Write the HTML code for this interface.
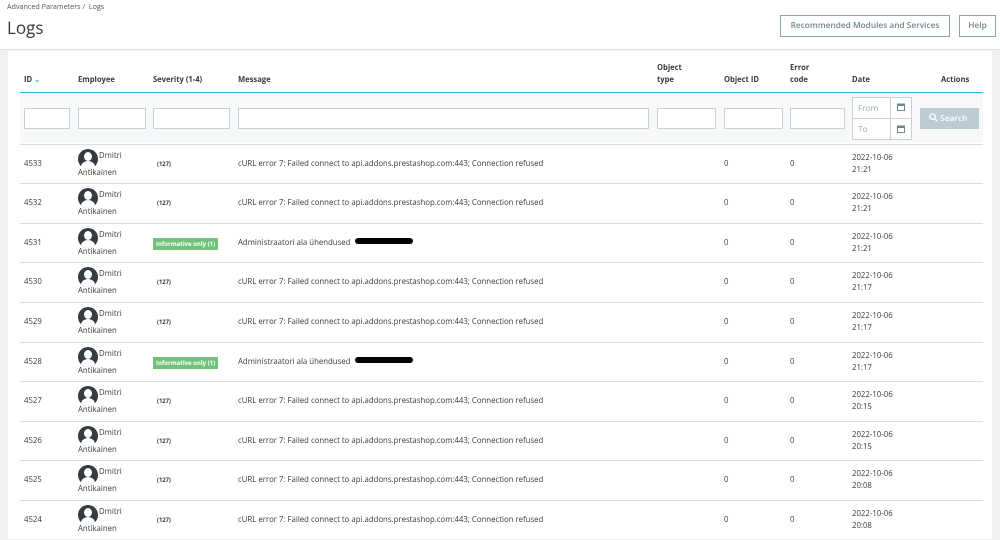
<!DOCTYPE html>
<html><head><meta charset="utf-8"><style>
*{margin:0;padding:0;box-sizing:border-box}
body{width:1000px;height:539px;overflow:hidden;background:#eff1f2;font-family:"Open Sans","Liberation Sans",sans-serif;color:#363a41;position:relative;font-size:7.8px}
.hdr{position:absolute;left:0;top:0;width:1000px;height:50px;background:#fff;border-bottom:1px solid #dfe3e6}
.bc{position:absolute;left:7px;top:2px;font-size:7.2px;color:#555}
.ttl{position:absolute;left:7px;top:16px;font-size:17px;color:#363a41}
.btn{position:absolute;top:15px;height:22px;border:1px solid #8fa1aa;background:#fff;color:#6c868e;font-size:8.3px;font-weight:600;line-height:20px;text-align:center}
.panel{position:absolute;left:8px;top:51px;width:984px;height:488px;background:#fff}
.a{position:absolute;white-space:nowrap}
.th{font-weight:bold;font-size:7.6px;color:#363a41;line-height:12px}
.inp{position:absolute;top:108px;height:21px;border:1px solid #c9d0d3;background:#fff}
.row{position:absolute;left:20px;width:963px;height:40px;border-top:1px solid #d8dee2}
.av{position:absolute;left:58px;top:4px;width:20px;height:20px;border-radius:50%;background:#363a41;overflow:hidden}
.av:before{content:"";position:absolute;left:6px;top:3px;width:8px;height:9px;border-radius:50%;background:#fff}
.av:after{content:"";position:absolute;left:3px;top:12px;width:14px;height:12px;border-radius:50%;background:#fff}
.badge{position:absolute;left:133px;top:14px;height:12px;background:#72c279;color:#fff;font-size:6px;font-weight:bold;padding:0 3px;line-height:12px}
</style></head><body>
<div class="hdr">
<div class="bc">Advanced Parameters&nbsp;/&nbsp; Logs</div>
<div class="ttl">Logs</div>
<div class="btn" style="left:780px;width:170px">Recommended Modules and Services</div>
<div class="btn" style="left:959px;width:37px">Help</div>
</div>
<div class="panel"></div>
<div class="a th" style="left:24px;top:74px">ID <span style="color:#25b9d7">&#8964;</span></div>
<div class="a th" style="left:78px;top:74px">Employee</div>
<div class="a th" style="left:153px;top:74px">Severity (1-4)</div>
<div class="a th" style="left:238px;top:74px">Message</div>
<div class="a th" style="left:657px;top:62px">Object<br>type</div>
<div class="a th" style="left:724px;top:74px">Object ID</div>
<div class="a th" style="left:790px;top:62px">Error<br>code</div>
<div class="a th" style="left:852px;top:74px">Date</div>
<div class="a th" style="left:941px;top:74px">Actions</div>
<div class="a" style="left:20px;top:92px;width:963px;height:51px;background:#f6f8f9;border-top:1.5px solid #25b9d7"></div>
<div class="inp" style="left:24px;width:46px"></div>
<div class="inp" style="left:78px;width:68px"></div>
<div class="inp" style="left:153px;width:77px"></div>
<div class="inp" style="left:238px;width:411px"></div>
<div class="inp" style="left:657px;width:59px"></div>
<div class="inp" style="left:724px;width:59px"></div>
<div class="inp" style="left:790px;width:55px"></div>
<div class="a" style="left:852px;top:97px;width:60px;height:43px;border:1px solid #c9d0d3;background:#fff"></div>
<div class="a" style="left:852px;top:118px;width:60px;height:1px;background:#c9d0d3"></div>
<div class="a" style="left:890px;top:97px;width:1px;height:43px;background:#c9d0d3"></div>
<div class="a" style="left:858px;top:103px;color:#9aa;font-size:8.3px">From</div>
<div class="a" style="left:858px;top:124px;color:#9aa;font-size:8.3px">To</div>
<svg class="a" style="left:897px;top:103px" width="8" height="8" viewBox="0 0 8 8"><rect x="0.5" y="1" width="7" height="6.5" fill="none" stroke="#6c868e"/><rect x="0.5" y="1" width="7" height="2" fill="#6c868e"/></svg>
<svg class="a" style="left:897px;top:125px" width="8" height="8" viewBox="0 0 8 8"><rect x="0.5" y="1" width="7" height="6.5" fill="none" stroke="#6c868e"/><rect x="0.5" y="1" width="7" height="2" fill="#6c868e"/></svg>
<div class="a" style="left:920px;top:108px;width:59px;height:21px;background:#bbcdd2;color:#fff;font-size:8.3px;font-weight:600;line-height:21px;padding-left:9px"><svg width="9" height="9" viewBox="0 0 9 9" style="vertical-align:-1px"><circle cx="3.6" cy="3.6" r="2.7" fill="none" stroke="#fff" stroke-width="1.3"/><path d="M5.6 5.6L8.3 8.3" stroke="#fff" stroke-width="1.5"/></svg> Search</div>
<div id="rows"></div>
<script>
var d=[["4533",0,"21:21"],["4532",0,"21:21"],["4531",1,"21:21"],["4530",0,"21:17"],["4529",0,"21:17"],["4528",1,"21:17"],["4527",0,"20:15"],["4526",0,"20:15"],["4525",0,"20:08"],["4524",0,"20:08"]];
var h="";
d.forEach(function(r,i){var t=143.5+i*39.6;
h+='<div class="row" style="top:'+t+'px"><div class="a" style="left:4px;top:14px">'+r[0]+'</div><div class="av"></div><div class="a" style="left:79px;top:6px">Dmitri</div><div class="a" style="left:58px;top:23px">Antikainen</div>'+
(r[1]?'<div class="badge">Informative only (1)</div><div class="a" style="left:218px;top:14px">Administraatori ala ühendused</div><div class="a" style="left:335px;top:14px;width:58px;height:6px;background:#000;border-radius:4px"></div>':'<div class="a" style="left:137px;top:15px;font-size:5.8px;font-weight:bold">(127)</div><div class="a" style="left:218px;top:14px">cURL error 7: Failed connect to api.addons.prestashop.com:443; Connection refused</div>')+
'<div class="a" style="left:704px;top:14px">0</div><div class="a" style="left:770px;top:14px">0</div><div class="a" style="left:832px;top:8px">2022-10-06</div><div class="a" style="left:832px;top:20px">'+r[2]+'</div></div>';});
document.getElementById("rows").innerHTML=h;
</script>
</body></html>
